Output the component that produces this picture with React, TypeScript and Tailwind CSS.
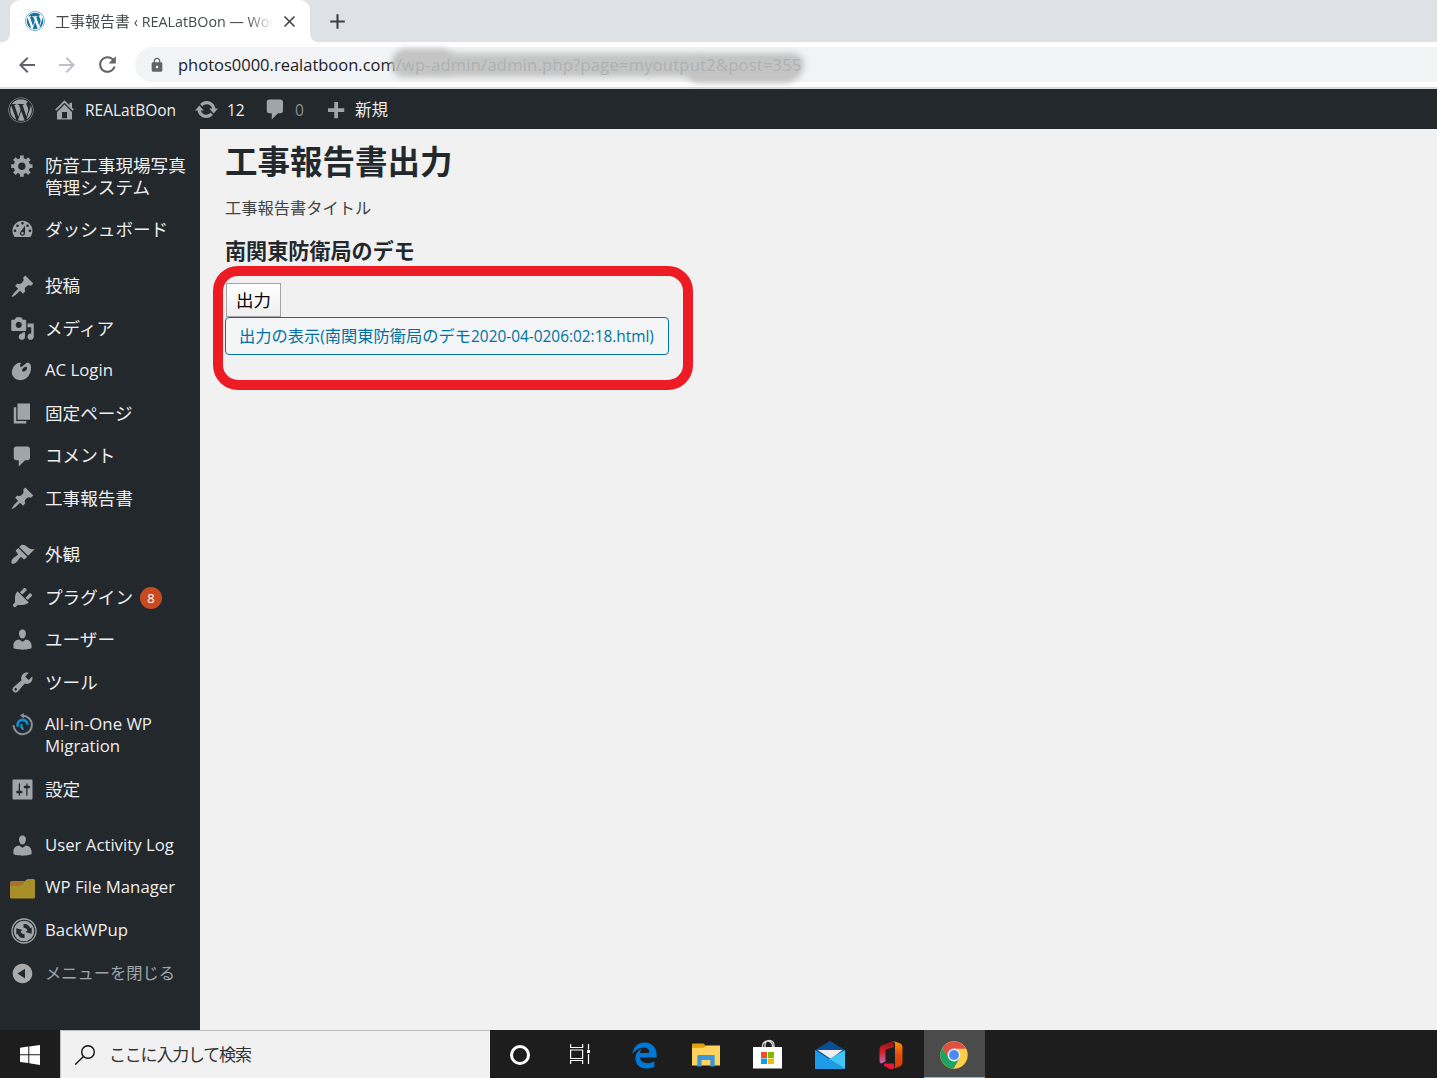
import React from "react";
import clsx from "clsx";
import { FaWordpress } from "react-icons/fa";
import { FaEdgeLegacy } from "react-icons/fa6";
import {
  MdAdd,
  MdArrowBack,
  MdArrowForward,
  MdClose,
  MdLock,
  MdRefresh,
} from "react-icons/md";

const ICONS = {
  generic:
    "M18 12h-2.18c-.17.7-.44 1.35-.81 1.93l1.54 1.54-2.1 2.1-1.54-1.54c-.58.36-1.23.63-1.91.79V19H8v-2.18c-.68-.16-1.33-.43-1.91-.79l-1.54 1.54-2.12-2.12 1.54-1.54c-.36-.58-.63-1.23-.79-1.91H1V9.03h2.17c.16-.7.44-1.35.8-1.94L2.43 5.55l2.1-2.1 1.54 1.54c.58-.37 1.24-.64 1.93-.81V2h3v2.18c.68.16 1.33.43 1.91.79l1.54-1.54 2.12 2.12-1.54 1.54c.36.59.64 1.24.8 1.94H18V12zm-8.5 1.5c1.66 0 3-1.34 3-3s-1.34-3-3-3-3 1.34-3 3 1.34 3 3 3z",
  dashboard:
    "M3.76 16h12.48c1.1-1.37 1.76-3.11 1.76-5 0-4.42-3.58-8-8-8s-8 3.58-8 8c0 1.89.66 3.63 1.76 5zM10 4c.55 0 1 .45 1 1s-.45 1-1 1-1-.45-1-1 .45-1 1-1zM6 6c.55 0 1 .45 1 1s-.45 1-1 1-1-.45-1-1 .45-1 1-1zm8 0c.55 0 1 .45 1 1s-.45 1-1 1-1-.45-1-1 .45-1 1-1zm-5.37 5.55L12 7v6c0 1.1-.9 2-2 2s-2-.9-2-2c0-.57.24-1.08.63-1.45zM4 10c.55 0 1 .45 1 1s-.45 1-1 1-1-.45-1-1 .45-1 1-1zm12 0c.55 0 1 .45 1 1s-.45 1-1 1-1-.45-1-1 .45-1 1-1zm-5 3c0-.55-.45-1-1-1s-1 .45-1 1 .45 1 1 1 1-.45 1-1z",
  post: "M10.44 3.02l1.82-1.82 6.36 6.35-1.83 1.82c-1.05-.68-2.48-.57-3.41.36l-.75.75c-.92.93-1.04 2.35-.35 3.41l-1.83 1.82-2.41-2.41-2.8 2.79c-.42.42-3.38 2.71-3.8 2.29s1.86-3.39 2.28-3.81l2.79-2.79L4.1 9.36l1.83-1.82c1.05.69 2.48.57 3.4-.36l.75-.75c.93-.92 1.05-2.35.36-3.41z",
  media:
    "M13 11V4c0-.55-.45-1-1-1h-1.67L9 1H5L3.67 3H2c-.55 0-1 .45-1 1v7c0 .55.45 1 1 1h10c.55 0 1-.45 1-1zM7 4.5c1.38 0 2.5 1.12 2.5 2.5S8.38 9.5 7 9.5 4.5 8.38 4.5 7 5.62 4.5 7 4.5zM14 6h5v10.5c0 1.38-1.12 2.5-2.5 2.5S14 17.88 14 16.5s1.12-2.5 2.5-2.5c.17 0 .34.02.5.05V9h-3V6zm-4 8.05V13h2v3.5c0 1.38-1.12 2.5-2.5 2.5S7 17.88 7 16.5 8.12 14 9.5 14c.17 0 .34.02.5.05z",
  art: "M8.55 3.06c1.01.34-1.95 2.01-.1 3.13 1.04.63 3.31-2.22 4.45-2.86.97-.54 2.67-.65 3.53 1.23 1.09 2.38.14 8.57-3.79 11.06-3.97 2.5-8.97 1.23-10.7-2.66-2.01-4.53 3.12-11.09 6.61-9.9zm1.21 6.45c.73 1.64 4.7-.5 3.79-2.8-.59-1.49-4.48 1.25-3.79 2.8z",
  page: "M6 15V2h10v13H6zm-1 1h8v2H3V5h2v11z",
  comments:
    "M5 2h9c1.1 0 2 .9 2 2v7c0 1.1-.9 2-2 2h-2l-5 5v-5H5c-1.1 0-2-.9-2-2V4c0-1.1.9-2 2-2z",
  appearance:
    "M14.48 11.06L7.41 3.99l1.5-1.5c.5-.56 2.3-.47 3.51.32 1.21.8 1.43 1.28 2.91 2.1 1.18.64 2.45 1.26 4.45.85zm-.71.71L6.7 4.7 4.93 6.47c-.39.39-.39 1.02 0 1.41l1.06 1.06c.39.39.39 1.03 0 1.42-.6.6-1.43 1.11-2.21 1.69-.35.26-.7.53-1.01.84C1.43 14.23.4 16.08 1.4 17.07c.99 1 2.84-.03 4.18-1.36.31-.31.58-.66.85-1.02.57-.78 1.08-1.61 1.69-2.21.39-.39 1.02-.39 1.41 0l1.06 1.06c.39.39 1.02.39 1.41 0z",
  plugins:
    "M13.11 4.36L9.87 7.6 8 5.73l3.24-3.24c.35-.34 1.05-.2 1.56.32.52.51.66 1.21.31 1.55zm-8 1.77l.91-1.12 9.01 9.01-1.19.84c-.71.71-2.63 1.16-3.82 1.16H6.14L4.9 17.26c-.59.59-1.54.59-2.12 0-.59-.58-.59-1.53 0-2.12l1.24-1.24v-3.88c0-1.13.4-3.19 1.09-3.89zm7.26 3.97l3.24-3.24c.34-.35 1.04-.21 1.55.31.52.51.66 1.21.31 1.55l-3.24 3.25z",
  users:
    "M10 9.25c-2.27 0-2.73-3.44-2.73-3.44C7 4.02 7.82 2 9.97 2c2.16 0 2.98 2.02 2.71 3.81 0 0-.41 3.44-2.68 3.44zm0 2.57L12.72 10c2.39 0 4.52 2.33 4.52 4.53v2.49s-3.65 1.13-7.24 1.13c-3.65 0-7.24-1.13-7.24-1.13v-2.49c0-2.25 1.94-4.48 4.47-4.48z",
  tools:
    "M16.68 9.77c-1.34 1.34-3.3 1.67-4.95.99l-5.41 6.52c-.99.99-2.59.99-3.58 0s-.99-2.59 0-3.57l6.52-5.42c-.68-1.65-.35-3.61.99-4.95 1.28-1.28 3.12-1.62 4.72-1.06l-2.89 2.89 2.82 2.82 2.86-2.87c.53 1.58.18 3.39-1.08 4.65zM3.81 16.21c.4.39 1.04.39 1.43 0 .4-.4.4-1.04 0-1.43-.39-.4-1.03-.4-1.43 0-.39.39-.39 1.03 0 1.43z",
  settings:
    "M18 17V3c0-.55-.45-1-1-1H3c-.55 0-1 .45-1 1v14c0 .55.45 1 1 1h14c.55 0 1-.45 1-1zM8 11h1c.55 0 1 .45 1 1s-.45 1-1 1H8v1.5c0 .28-.22.5-.5.5s-.5-.22-.5-.5V13H6c-.55 0-1-.45-1-1s.45-1 1-1h1V5.5c0-.28.22-.5.5-.5s.5.22.5.5V11zm5-2h-1c-.55 0-1-.45-1-1s.45-1 1-1h1V5.5c0-.28.22-.5.5-.5s.5.22.5.5V7h1c.55 0 1 .45 1 1s-.45 1-1 1h-1v5.5c0 .28-.22.5-.5.5s-.5-.22-.5-.5V9z",
  collapse:
    "M10 2.16c4.33 0 7.84 3.51 7.84 7.84s-3.51 7.84-7.84 7.84S2.16 14.33 2.16 10 5.67 2.16 10 2.16zM12 6.1v7.8L6.1 10z",
  home: "M16 8.5l1.53 1.53-1.06 1.06L10 4.6l-6.47 6.49-1.06-1.06L10 2.5l4 4v-2h2v4zm-6-2.46l6 5.99V18H4v-5.97zM12 17v-5H8v5h4z",
  update:
    "M10.2 3.28c3.53 0 6.43 2.61 6.92 6h2.08l-3.5 4-3.5-4h2.32c-.45-1.97-2.21-3.45-4.32-3.45-1.45 0-2.73.71-3.54 1.78L4.95 5.66C6.23 4.2 8.11 3.28 10.2 3.28zm-.4 13.44c-3.52 0-6.43-2.61-6.92-6H.8l3.5-4c1.17 1.33 2.33 2.67 3.5 4H5.48c.45 1.97 2.21 3.45 4.32 3.45 1.45 0 2.73-.71 3.54-1.78l1.71 1.95c-1.28 1.46-3.15 2.38-5.25 2.38z",
  plus: "M17 9v3h-5v5H9v-5H4V9h5V4h3v5z",
};

interface DashiconProps {
  name: keyof typeof ICONS;
  className?: string;
}

const Dashicon: React.FC<DashiconProps> = ({ name, className }) => (
  <svg
    viewBox="0 0 20 20"
    className={clsx("size-[25px] shrink-0 text-[#a0a5aa]", className)}
    fill="currentColor"
    fillRule="evenodd"
  >
    <path d={ICONS[name]} />
  </svg>
);

const MigrationIcon = () => (
  <svg viewBox="0 0 25 25" className="size-[25px] shrink-0" fill="none">
    <path
      d="M12.500 3.800a9.200 9.200 0 1 1-9 9.500"
      stroke="#8d9297"
      strokeWidth="2"
    />
    <path d="M13.800 1v5.600L10 3.600z" fill="#8d9297" />
    <path
      d="M7.800 14.600a5 5 0 1 1 9.700-1.800"
      stroke="#0d94d6"
      strokeWidth="2.600"
    />
    <path d="M12.200 12.200a2.600 2.600 0 0 0 1.600 4.600" stroke="#0d94d6" strokeWidth="2.400" />
  </svg>
);

const FolderIcon = () => (
  <svg viewBox="0 0 25 25" className="size-[25px] shrink-0">
    <path d="M0 6.500Q0 5 1.500 5H15v8H0z" fill="#a87328" />
    <path
      d="M0 11.500Q0 10 1.500 10H9q2.500 0 4-2l2.500-3.500q1-1.500 3-1.500h5Q25 3 25 4.500v16.500q0 1.500-1.500 1.500h-22Q0 22.500 0 21z"
      fill="#a88f28"
    />
  </svg>
);

const BackupIcon = () => (
  <svg
    viewBox="0 0 26 26"
    className="-mr-[2px] ml-[1px] size-[26px] shrink-0"
    fill="#a0a5aa"
  >
    <circle cx="13" cy="13" r="12" fill="none" stroke="#a0a5aa" strokeWidth="1.300" />
    <circle cx="13" cy="13" r="10.300" />
    <g fill="#23282d">
      <path d="M12.500 6c3.500-.4 6 1.400 6.800 4.300l1.400-1v6.400l-6.200-1.700 1.900-1.300c-.3-2-1.900-2.900-3.900-3z" />
      <path d="M13.500 20c-3.500.4-6-1.400-6.800-4.300l-1.400 1v-6.400l6.200 1.700-1.900 1.300c.3 2 1.900 2.900 3.900 3z" />
    </g>
  </svg>
);

interface MenuItem {
  label: string;
  icon?: keyof typeof ICONS;
  custom?: React.ReactNode;
  latin?: boolean;
  gap?: boolean;
  count?: number;
}

const MENU: MenuItem[] = [
  { label: "防音工事現場写真管理システム", icon: "generic" },
  { label: "ダッシュボード", icon: "dashboard" },
  { label: "投稿", icon: "post", gap: true },
  { label: "メディア", icon: "media" },
  { label: "AC Login", icon: "art", latin: true },
  { label: "固定ページ", icon: "page" },
  { label: "コメント", icon: "comments" },
  { label: "工事報告書", icon: "post" },
  { label: "外観", icon: "appearance", gap: true },
  { label: "プラグイン", icon: "plugins", count: 8 },
  { label: "ユーザー", icon: "users" },
  { label: "ツール", icon: "tools" },
  { label: "All-in-One WP Migration", custom: <MigrationIcon />, latin: true },
  { label: "設定", icon: "settings" },
  { label: "User Activity Log", icon: "users", latin: true, gap: true },
  { label: "WP File Manager", custom: <FolderIcon />, latin: true },
  { label: "BackWPup", custom: <BackupIcon />, latin: true },
];

const BrowserChrome = () => (
  <header className="shrink-0">
    <div className="flex h-[42px] items-end bg-[#dee1e6]">
      <div className="h-[42px] w-[10px] bg-white">
        <div className="h-full rounded-br-[8px] bg-[#dee1e6]" />
      </div>
      <div className="flex h-[42px] w-[300px] items-center rounded-t-[10px] bg-white pl-[15px]">
        <FaWordpress className="size-5 shrink-0 text-[#16759f]" />
        <div className="ml-[10px] w-[218px] overflow-hidden whitespace-nowrap text-[15px] leading-5 text-[#45494d] [mask-image:linear-gradient(to_right,black_192px,transparent_218px)]">
          工事報告書
          <span className="text-[14.300px]"> ‹ REALatBOon — WordPress</span>
        </div>
        <MdClose className="ml-[7px] size-[19px] shrink-0 text-[#3c4043]" />
      </div>
      <div className="h-[42px] w-[10px] bg-white">
        <div className="h-full rounded-bl-[8px] bg-[#dee1e6]" />
      </div>
      <MdAdd className="mb-[8px] ml-[5px] size-[25px] text-[#3c4043]" />
    </div>
    <div className="flex h-[45px] items-center bg-white pl-[15px]">
      <MdArrowBack className="size-6 text-[#5f6368]" />
      <MdArrowForward className="ml-4 size-6 text-[#bdc1c6]" />
      <MdRefresh className="ml-4 size-[25px] text-[#5f6368]" />
      <div className="ml-[15px] flex h-[35px] flex-1 items-center rounded-l-full bg-[#f1f3f4] pl-[14px]">
        <MdLock className="size-4 text-[#5f6368]" />
        <div className="ml-[13px] whitespace-nowrap text-[16.500px] leading-6 text-[#202124]">
          photos0000.realatboon.com
        </div>
        <div className="relative">
          <div className="absolute top-0 -left-[4px] h-[24px] w-[412px] rounded-full bg-[#c4c4c4] blur-[3px]" />
          <div className="absolute -top-[4px] -left-[2px] h-[24px] w-[60px] rounded-full bg-[#c4c4c4] blur-[3px]" />
          <div className="absolute top-[6px] left-[290px] h-[24px] w-[112px] rounded-full bg-[#c4c4c4] blur-[3px]" />
          <div className="relative whitespace-nowrap text-[16.500px] leading-6 tracking-[.250px] text-[#b0b1b2]">
            /wp-admin/admin.php?page=myoutput2&amp;post=355
          </div>
        </div>
      </div>
    </div>
    <div className="h-[2px] bg-[#dadce0]" />
  </header>
);

const AdminBar = () => (
  <div className="flex h-10 shrink-0 items-center bg-[#23282d] pt-[1px] pl-[8px] text-[15.500px] leading-10 text-[#eee]">
    <FaWordpress className="size-[26px] text-[#a0a5aa]" />
    <Dashicon name="home" className="ml-[18px]" />
    <span className="ml-[8px] w-[91px]">REALatBOon</span>
    <Dashicon name="update" className="ml-[18px]" />
    <span className="ml-[8px] w-[18px]">12</span>
    <Dashicon name="comments" className="ml-[18px]" />
    <span className="ml-[7px] w-[10px] text-[#8b8f94]">0</span>
    <Dashicon name="plus" className="ml-[18px]" />
    <span className="ml-[7px] text-[16.500px]">新規</span>
  </div>
);

const Sidebar = () => (
  <nav className="w-[200px] shrink-0 bg-[#23282d] pt-[15px] text-[#eee]">
    <ul>
      {MENU.map((item) => (
        <li
          key={item.label}
          className={clsx(
            "flex items-start pl-[10px]",
            item.gap && "mt-[13.750px]"
          )}
        >
          <div className="flex h-[42.500px] items-center">
            {item.custom || (item.icon && <Dashicon name={item.icon} />)}
          </div>
          <div
            className={clsx(
              "ml-[10px] pt-[9.500px] pb-[11px] leading-[22px]",
              item.latin
                ? "w-[140px] text-[16.750px]"
                : "text-[17.600px]",
              item.label.length > 12 && !item.latin && "w-[145px]"
            )}
          >
            {item.label}
          </div>
          {item.count && (
            <span className="mt-[11px] ml-[7px] flex size-[22px] items-center justify-center rounded-full bg-[#ca4a1f] pt-[1px] text-[13px] text-white">
              {item.count}
            </span>
          )}
        </li>
      ))}
      <li className="flex h-[42.500px] items-center pl-[10px] text-[#a0a5aa]">
        <Dashicon name="collapse" className="text-[#aaaaaa]" />
        <span className="ml-[10px] text-[16.250px]">メニューを閉じる</span>
      </li>
    </ul>
  </nav>
);

const ReportOutput = () => (
  <main className="flex-1 bg-[#f1f1f1] pt-[12px] pl-[25px] text-[#23282d]">
    <h1 className="text-[32.500px] leading-[42px] font-bold">
      工事報告書出力
    </h1>
    <p className="mt-[13px] text-[16.250px] leading-6 text-[#444]">
      工事報告書タイトル
    </p>
    <h2 className="mt-[15px] text-[21.100px] leading-8 font-bold">
      南関東防衛局のデモ
    </h2>
    <div className="relative mt-[16px] flex flex-col items-start">
      <button
        type="button"
        className="ml-[1px] h-[34px] w-[55px] border border-[#a3a3a3] bg-linear-to-b from-white to-[#efefef] text-[17.500px] leading-8 text-black"
      >
        出力
      </button>
      <a className="flex h-[38px] w-[444px] items-center rounded-[4px] border border-[#0071a1] bg-[#f3f5f6] pt-[1px] pl-[13px] text-[16.250px] whitespace-nowrap text-[#0071a1]">
        出力の表示
        <span className="text-[15.400px]">(</span>
        南関東防衛局のデモ
        <span className="text-[15.400px]">2020-04-0206:02:18.html)</span>
      </a>
      <div className="pointer-events-none absolute -top-[17px] -left-[12px] h-[124px] w-[480px] rounded-[25px] border-[10px] border-[#ed1c24]" />
    </div>
  </main>
);

const TaskbarIcons = () => (
  <>
    <div className="flex w-[60px] items-center justify-center pt-[2px]">
      <div className="size-5 rounded-full border-[3px] border-white" />
    </div>
    <div className="flex w-[60px] items-center justify-center">
      <svg viewBox="0 0 20 20" className="size-5" fill="none" stroke="#fff" strokeWidth="1.200">
        <path d="M.6 0v3.500h12V0M.6 6h12v8.500H.6zM.6 20v-3.500h12V20M18.500 0v5.500M18.500 10v10" />
        <path d="M17 6h3v3h-3z" fill="#fff" stroke="none" />
      </svg>
    </div>
    <div className="ml-[3px] flex w-[62px] items-center justify-center pt-[2px]">
      <FaEdgeLegacy className="size-[27px] text-[#0078d7]" />
    </div>
    <div className="flex w-[62px] items-center justify-center pt-[1px]">
      <svg viewBox="0 0 28 24" className="h-6 w-7">
        <path d="M0 1.500Q0 .6 1 .6h10.500l2.200 2v4H0z" fill="#e3a008" />
        <path d="M0 4.800h12l2-2.200h14v20H0z" fill="#ffd35c" />
        <path d="M5.300 13q0-1 1-1h15.400q1 0 1 1v10.600h-4.400V17H9.500v6.600H5.300z" fill="#3a96dd" />
      </svg>
    </div>
    <div className="flex w-[62px] items-center justify-center pr-[2px]">
      <svg viewBox="0 0 29 30" className="h-[30px] w-[29px]">
        <path d="M9.500 8.500V7a5 5 0 0 1 10 0v1.500M12 8V6a4.500 4.500 0 0 1 9 0v2" fill="none" stroke="#ddd" strokeWidth="1.300" />
        <path d="M0 8h29v21.500H0z" fill="#fff" />
        <path d="M8 13h6v6H8z" fill="#f25022" />
        <path d="M15 13h6v6h-6z" fill="#7fba00" />
        <path d="M8 19.500h6v5.500H8z" fill="#00a4ef" />
        <path d="M15 19.500h6v5.500h-6z" fill="#ffb900" />
      </svg>
    </div>
    <div className="flex w-[62px] items-center justify-center pt-[2px]">
      <svg viewBox="0 0 30 28" className="h-7 w-[30px]">
        <path d="M0 9L15 0l15 9v10H0z" fill="#0a4f96" />
        <path d="M2.500 9h25L16 18z" fill="#eee" />
        <path d="M0 9l30 19H0z" fill="#1e9be6" />
        <path d="M30 9v19L14 18z" fill="#40c4f5" />
      </svg>
    </div>
    <div className="flex w-[63px] items-center justify-center pt-[2px] pr-[3px]">
      <svg viewBox="0 0 24 28" className="h-7 w-6">
        <defs>
          <linearGradient id="officeLeft" x1="0" y1="0" x2="0" y2="1">
            <stop offset="0" stopColor="#8f1218" />
            <stop offset=".5" stopColor="#d6232b" />
            <stop offset="1" stopColor="#bb6cc0" />
          </linearGradient>
          <linearGradient id="officeRight" x1="0" y1="0" x2="0" y2="1">
            <stop offset="0" stopColor="#ff9a00" />
            <stop offset=".5" stopColor="#e04a10" />
            <stop offset="1" stopColor="#d83b01" />
          </linearGradient>
        </defs>
        <path d="M14 0L3.500 4Q.5 5.200.5 8v12q0 2 2 2.500l4-2V8.500L15 6z" fill="url(#officeLeft)" />
        <path d="M6 22.500h9v5L12 28q-2 0-4-1.500l-3-2q-1-1.500 1-2z" fill="#e8173c" />
        <path d="M14 0l7 2.300q2.500 1 2.500 3.500v16q0 2.500-2.500 3.500L14 28q2-1 2-3V3q0-2-2-3z" fill="url(#officeRight)" />
      </svg>
    </div>
    <div className="flex w-[61px] items-center justify-center border-b border-[#76b9ed] bg-[#4b4b4b] pr-[2px]">
      <svg viewBox="0 0 28 28" className="mt-[3px] size-7">
        <circle cx="14" cy="14" r="13.700" fill="#ffcd46" />
        <path d="M2.200 7A13.700 13.700 0 0 1 26 7.700H14L8 17.500z" fill="#dd5144" />
        <path d="M2.200 7A13.700 13.700 0 0 0 13.500 27.700L19.500 17.300 8.500 17z" fill="#1da462" />
        <circle cx="14" cy="14" r="6.400" fill="#f1f1f1" />
        <circle cx="14" cy="14" r="5" fill="#4c8bf5" />
      </svg>
    </div>
  </>
);

const Taskbar = () => (
  <footer className="flex h-12 shrink-0 bg-[#1d1d1d]">
    <div className="flex w-[60px] items-center justify-center">
      <svg viewBox="0 0 20 20" className="mt-[2px] size-5" fill="#fff">
        <path d="M0 2.800L8.300 1.600v7.700H0zM9.300 1.400L20 0v9.300H9.300zM0 10.300h8.300V18L0 17zM9.300 10.300H20V20L9.300 18.300z" />
      </svg>
    </div>
    <div className="flex w-[430px] items-center border-t border-l border-[#bdbdbd] bg-[#f1f1f1] pl-[14px]">
      <svg viewBox="0 0 20 20" className="size-5" fill="none" stroke="#111" strokeWidth="1.400">
        <circle cx="13" cy="7" r="6.300" />
        <path d="M8.500 11.500L0 19.700" />
      </svg>
      <span className="ml-[14px] text-[17px] tracking-[-1.200px] text-[#333]">
        ここに入力して検索
      </span>
    </div>
    <TaskbarIcons />
  </footer>
);

export default function App() {
  return (
    <div className="flex h-[1078px] w-[1437px] flex-col overflow-hidden font-['Open_Sans','Noto_Sans_CJK_JP',sans-serif]">
      <BrowserChrome />
      <AdminBar />
      <div className="flex min-h-0 flex-1">
        <Sidebar />
        <ReportOutput />
      </div>
      <Taskbar />
    </div>
  );
}
